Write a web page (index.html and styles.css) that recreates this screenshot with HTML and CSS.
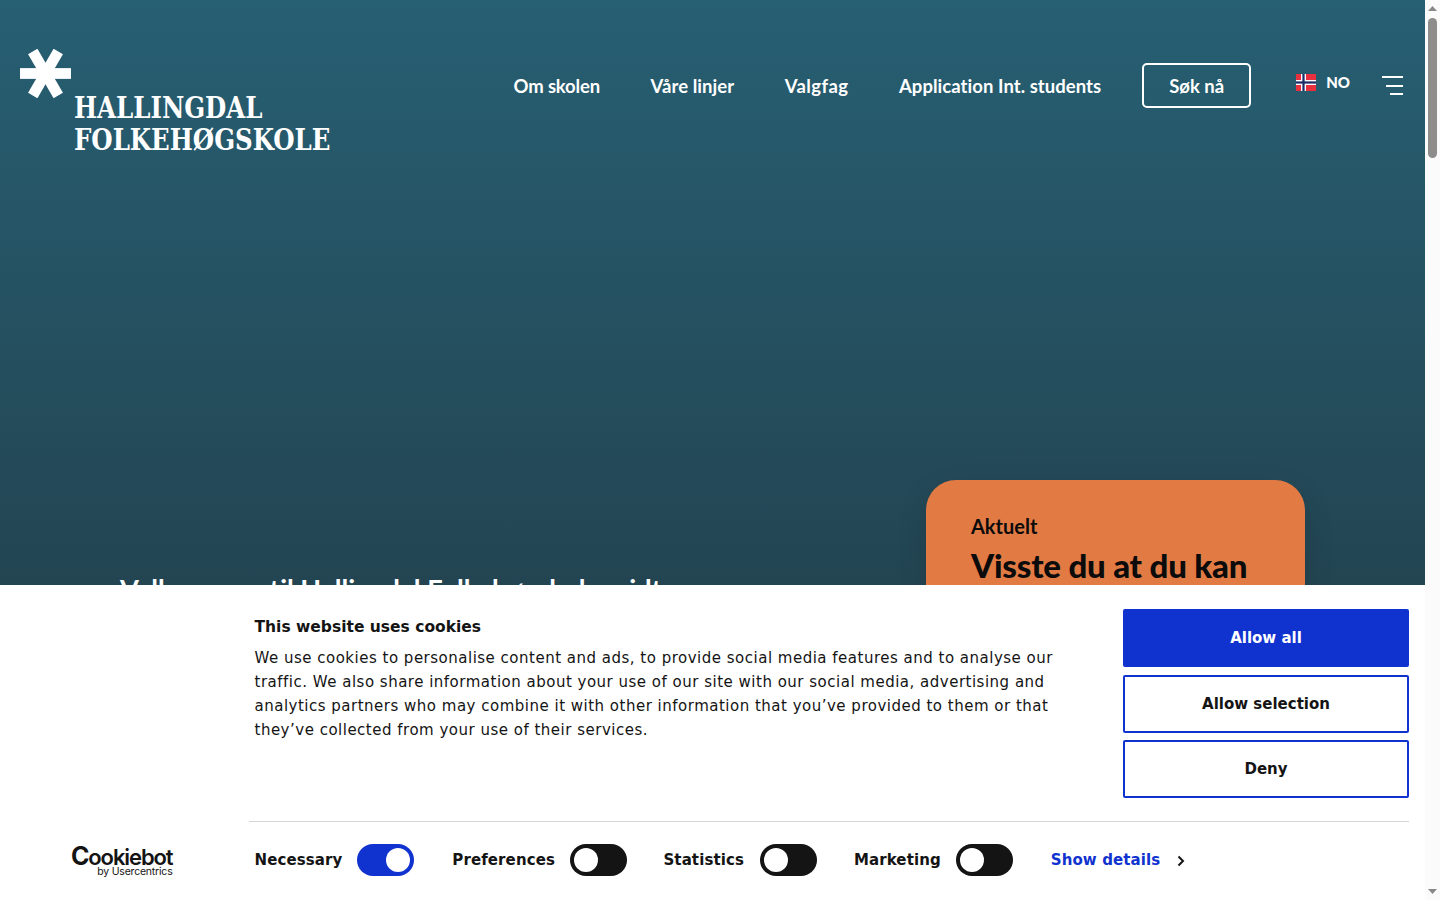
FILE: index.html
```html
<!DOCTYPE html>
<html lang="no">
<head>
<meta charset="utf-8">
<title>Hallingdal Folkehøgskole</title>
<link rel="stylesheet" href="styles.css">
</head>
<body>
<div class="viewport">
  <main class="page">
    <header class="header">
      <a class="logo" href="#">
        <svg class="logo-mark" width="51" height="49" viewBox="0 0 52 50" aria-hidden="true">
          <g fill="#fff" transform="translate(26 25)">
            <rect x="-26" y="-5.5" width="52" height="11"/>
            <rect x="-26" y="-5.5" width="52" height="11" transform="rotate(60)"/>
            <rect x="-26" y="-5.5" width="52" height="11" transform="rotate(120)"/>
          </g>
        </svg>
        <span class="logo-text">HALLINGDAL<br>FOLKEHØGSKOLE</span>
      </a>
      <nav class="nav">
        <a class="nav-om" href="#">Om skolen</a>
        <a href="#">Våre linjer</a>
        <a class="nav-val" href="#">Valgfag</a>
        <a href="#">Application Int. students</a>
      </nav>
      <a class="apply" href="#">Søk nå</a>
      <a class="lang" href="#">
        <svg width="20" height="17" viewBox="0 0 20 17" aria-hidden="true">
          <rect width="20" height="17" fill="#e8303f"/>
          <rect x="5" width="5" height="17" fill="#fff"/>
          <rect y="6" width="20" height="5" fill="#fff"/>
          <rect x="6.4" width="2.2" height="17" fill="#1c2a66"/>
          <rect y="7.4" width="20" height="2.2" fill="#1c2a66"/>
        </svg>
        <span>NO</span>
      </a>
      <button class="burger" aria-label="Meny"><i class="l1"></i><i class="l2"></i><i class="l3"></i></button>
    </header>
    <section class="hero">
      <h1 class="hero-title">Velkommen til Hallingdal Folkehøgskole midt</h1>
      <article class="card">
        <p class="card-label">Aktuelt</p>
        <h2 class="card-title">Visste du at du kan</h2>
      </article>
    </section>
    <aside class="cookie">
      <div class="cookie-brand">
        <div class="cb-logo"><span class="cb-name"><b>C</b>ookiebot</span><span class="cb-by">by Usercentrics</span></div>
      </div>
      <div class="cookie-main">
        <div class="cookie-top">
          <div class="cookie-text">
            <h3>This website uses cookies</h3>
            <p>We use cookies to personalise content and ads, to provide social media features and to analyse our traffic. We also share information about your use of our site with our social media, advertising and analytics partners who may combine it with other information that you’ve provided to them or that they’ve collected from your use of their services.</p>
          </div>
          <div class="cookie-buttons">
            <button class="btn primary">Allow all</button>
            <button class="btn">Allow selection</button>
            <button class="btn">Deny</button>
          </div>
        </div>
        <div class="cookie-bottom">
          <span class="opt opt-nec">Necessary <i class="toggle on"></i></span>
          <span class="opt opt-pre">Preferences <i class="toggle"></i></span>
          <span class="opt opt-sta">Statistics <i class="toggle"></i></span>
          <span class="opt opt-mar">Marketing <i class="toggle"></i></span>
          <a class="details" href="#">Show details
            <svg class="chev" width="8" height="12" viewBox="0 0 8 12" aria-hidden="true"><path d="M1.500 1.500 6 6l-4.500 4.500" fill="none" stroke="#141414" stroke-width="2"/></svg>
          </a>
        </div>
      </div>
    </aside>
  </main>
  <div class="scrollbar" aria-hidden="true">
    <svg class="arrow" width="15" height="17" viewBox="0 0 15 17"><path d="M3 11 7.5 6 12 11z" fill="#8a8787"/></svg>
    <div class="track"><div class="thumb"></div></div>
    <svg class="arrow" width="15" height="17" viewBox="0 0 15 17"><path d="M3 6h9l-4.500 5z" fill="#8a8787"/></svg>
  </div>
</div>
</body>
</html>
```
FILE: styles.css
```css
* { box-sizing: border-box; }
html, body { margin: 0; height: 100%; overflow: hidden; }
body { font-family: "Lato", "Liberation Sans", sans-serif; color: #fff; background: #fff; }
a { color: inherit; text-decoration: none; }

.viewport { display: flex; height: 900px; width: 1440px; }
.page {
  position: relative;
  flex: 0 0 1425px;
  height: 900px;
  overflow: hidden;
  background: linear-gradient(180deg, #275f73 0, #234451 600px);
}

/* Header */
.header { display: flex; align-items: flex-start; height: 480px; padding: 49px 22px 0 20px; }
.logo { display: flex; align-items: flex-start; flex: 1 1 auto; min-width: 0; }
.logo-mark { flex: none; }
.logo-text {
  display: block;
  margin: 43px 0 0 3px;
  font-family: "DejaVu Serif", serif;
  font-weight: 700;
  font-size: 30px;
  line-height: 32px;
  white-space: nowrap;
  transform: scaleX(.815);
  transform-origin: left center;
}
.nav { display: flex; gap: 50.500px; margin-top: 25px; font-size: 18.5px; font-weight: 700; line-height: 24px; letter-spacing: .05px; }
.nav-om { letter-spacing: -.15px; }
.nav-val { letter-spacing: .4px; }
.apply {
  display: flex; align-items: center; justify-content: center;
  width: 109px; height: 45px;
  margin: 14px 0 0 41px;
  border: 2px solid #fff; border-radius: 5px;
  font-size: 18.5px; font-weight: 700;
}
.lang { display: flex; align-items: center; gap: 10px; margin: 25px 0 0 45px; font-size: 15px; font-weight: 900; line-height: 17px; }
.burger { display: flex; flex-direction: column; align-items: flex-end; gap: 6.500px; width: 21px; margin: 27px 0 0 32px; padding: 0; border: 0; background: none; }
.burger i { display: block; height: 2px; background: #fff; }
.l1 { width: 21px; } .l2 { width: 17px; } .l3 { width: 13px; }

/* Hero */
.hero { display: flex; justify-content: space-between; align-items: flex-start; padding: 0 120px; }
.hero-title { margin: 93px 0 0; font-size: 27.200px; line-height: 32px; font-weight: 700; white-space: nowrap; }
.card {
  width: 379px; height: 300px; padding: 33px 45px;
  border-radius: 30px;
  background: #e27a44;
  color: #0b0b0b;
  box-shadow: 0 10px 30px rgba(0, 0, 0, .12);
}
.card-label { margin: 0; font-size: 20px; line-height: 26px; font-weight: 700; }
.card-title { margin: 6px 0 0; font-size: 33px; line-height: 40px; font-weight: 900; letter-spacing: -.2px; }

/* Cookie banner */
.cookie {
  position: absolute; left: 0; right: 0; bottom: 0; height: 315px;
  display: flex;
  padding: 24px 16px 0 0;
  background: #fff;
  color: #141414;
  font-family: "DejaVu Sans", sans-serif;
  font-size: 15px;
  letter-spacing: .5px;
}
.cookie-brand { flex: 0 0 249px; position: relative; }
.cb-logo { position: absolute; top: 238px; left: 70px; display: flex; flex-direction: column; align-items: flex-end; width: 102.500px; font-family: "Inter", sans-serif; letter-spacing: 0; color: #141414; }
.cb-name { font-size: 22px; line-height: 18px; font-weight: 600; letter-spacing: -1.1px; }
.cb-name b { font-weight: 700; font-size: 25px; }
.cb-by { font-size: 10.5px; line-height: 11px; letter-spacing: -.2px; font-weight: 400; }
.cookie-main { flex: 1; display: flex; flex-direction: column; }
.cookie-top { display: flex; justify-content: space-between; height: 213px; border-bottom: 1px solid #d6d6d6; }
.cookie-text { padding: 6px 0 0 5.500px; width: 812px; }
.cookie-text h3 { margin: 0 0 7px; font-size: 15.500px; line-height: 24px; font-weight: 700; letter-spacing: 0; }
.cookie-text p { margin: 0; line-height: 24px; }
.cookie-buttons { display: flex; flex-direction: column; gap: 7.500px; width: 286px; }
.btn {
  height: 58px;
  flex: none;
  border: 2px solid #1032cf; border-radius: 2px;
  background: #fff; color: #141414;
  font: 700 15px "DejaVu Sans", sans-serif; letter-spacing: 0;
}
.btn.primary { background: #1032cf; color: #fff; }
.cookie-bottom { display: flex; align-items: center; height: 76px; padding: 0 0 0 5.500px; font-weight: 700; letter-spacing: .1px; }
.opt { display: flex; align-items: center; gap: 15px; }
.opt-nec { margin-right: 38px; }
.opt-pre { margin-right: 36px; gap: 15.500px; }
.opt-sta { margin-right: 37px; gap: 16px; }
.opt-mar { margin-right: 38px; gap: 15px; }
.toggle { position: relative; display: block; width: 57px; height: 32px; border-radius: 16px; background: #141414; }
.toggle::after { content: ""; position: absolute; left: 4px; top: 4px; width: 24px; height: 24px; border-radius: 50%; background: #fff; }
.toggle.on { background: #1032cf; }
.toggle.on::after { left: 29px; }
.details { display: flex; align-items: center; gap: 17px; color: #1032cf; }
.chev { margin-top: 1px; }

/* Scrollbar */
.scrollbar { flex: 0 0 15px; display: flex; flex-direction: column; height: 900px; background: #fbfbfb; }
.arrow { flex: none; display: block; }
.track { flex: 1; padding: 1px 3px; }
.thumb { height: 140px; border-radius: 5px; background: #8f8c8c; }
```
